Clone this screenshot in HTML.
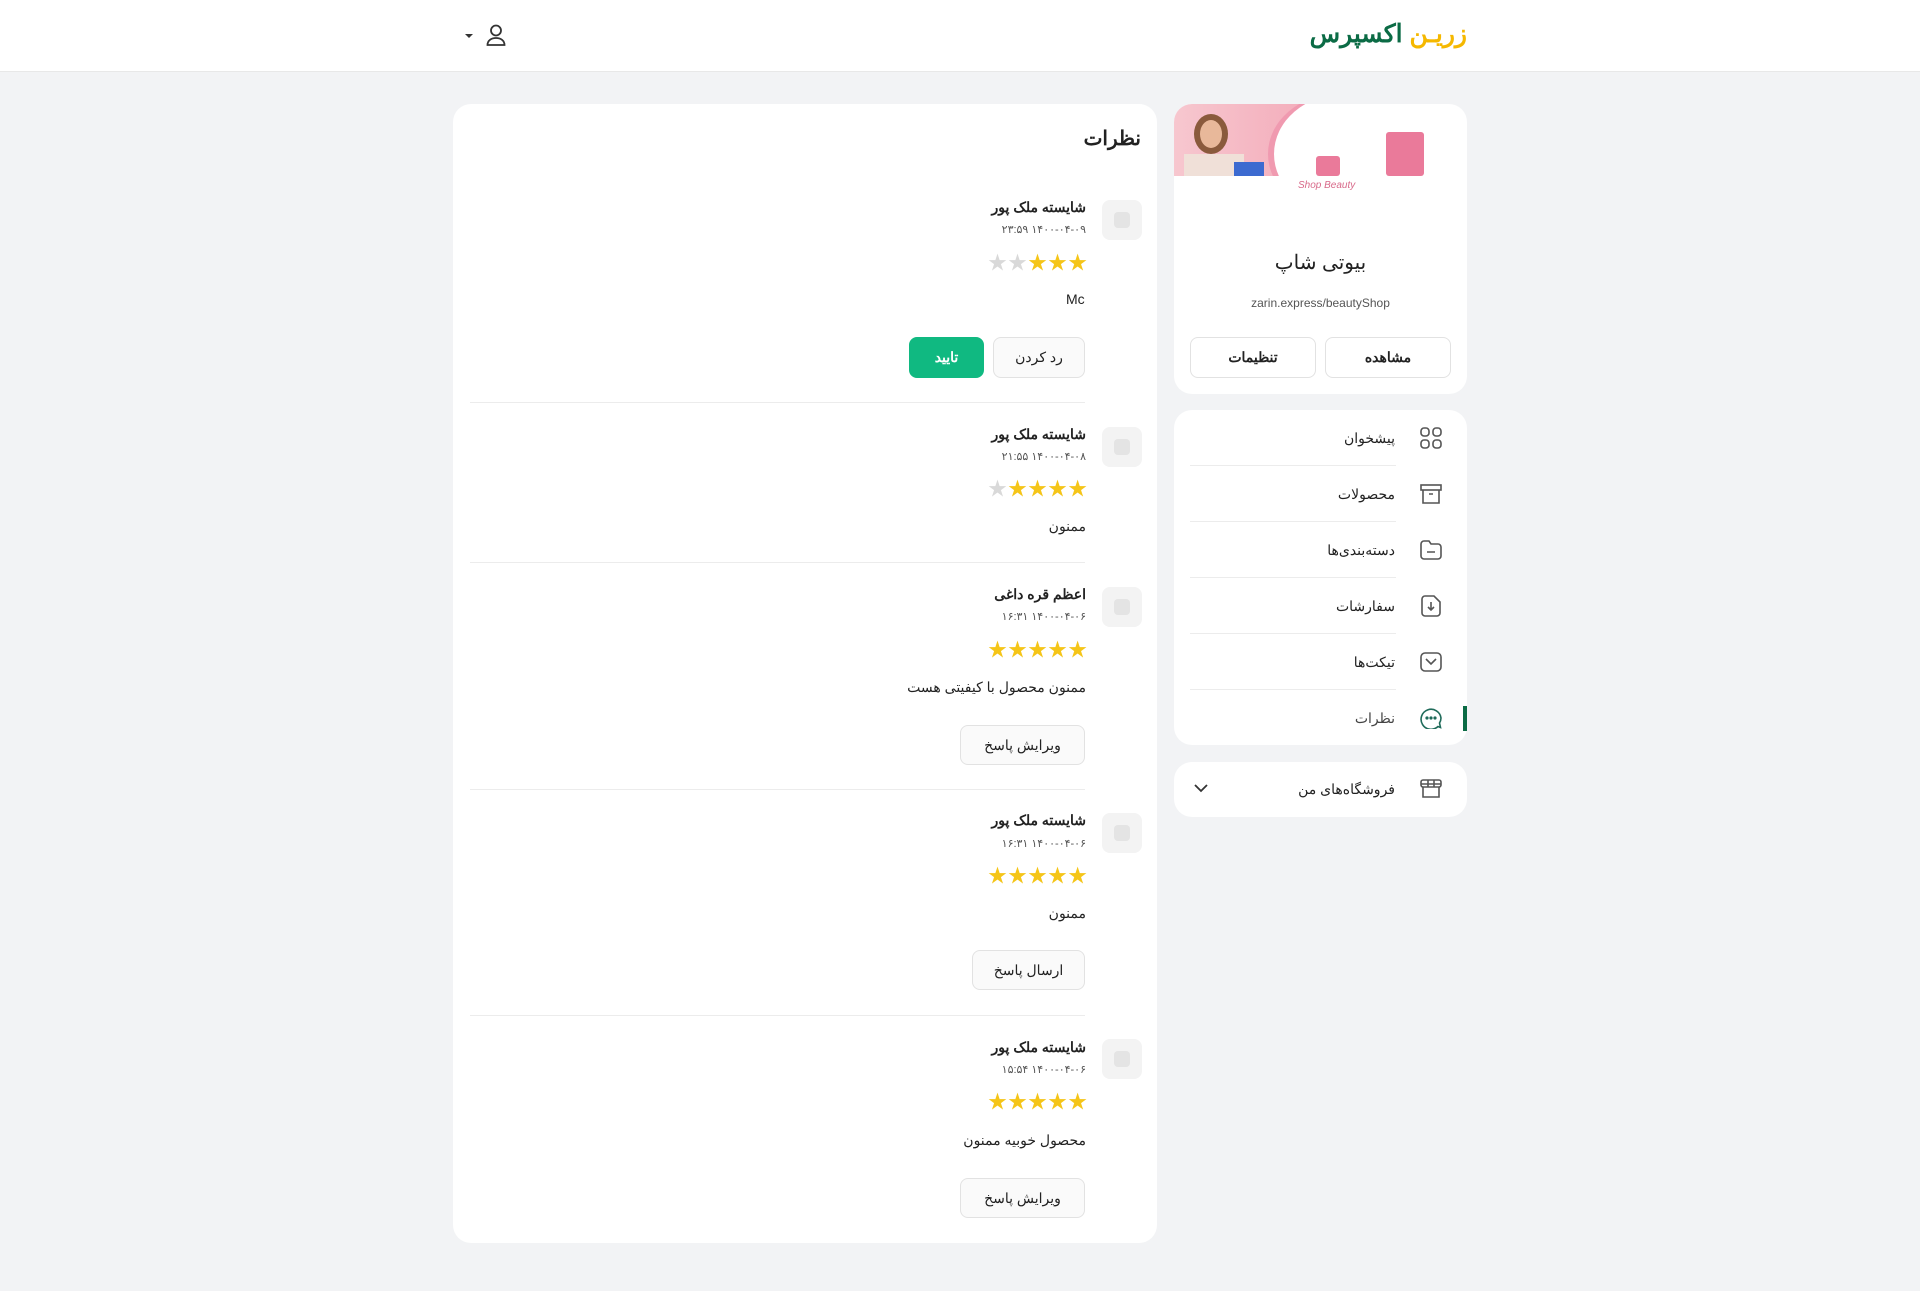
<!DOCTYPE html>
<html><head><meta charset="utf-8"><style>
*{box-sizing:border-box;margin:0;padding:0}
body{width:1920px;height:1291px;background:#f2f3f5;font-family:"Liberation Sans","Noto Sans CJK SC",sans-serif;color:#222;position:relative;overflow:hidden}
.a{position:absolute}
.r{position:absolute;direction:rtl;white-space:nowrap}
.card{position:absolute;background:#fff;border-radius:18px}
.btn{position:absolute;border:1px solid #e2e2e2;border-radius:8px;background:#fafafa;display:flex;align-items:center;justify-content:center;font-size:14px;direction:rtl}
.sep{position:absolute;height:1px;background:#ececec}
.av{position:absolute;width:40px;height:40px;border-radius:8px;background:#f3f3f3}
.av::after{content:"";position:absolute;left:12px;top:12px;width:16px;height:16px;border-radius:4px;background:#e4e4e4}
.name{font-size:14px;font-weight:bold}
.date{position:absolute;font-size:11px;color:#555;direction:ltr;white-space:nowrap;unicode-bidi:plaintext}
.txt{font-size:14px}
.stars{position:absolute;display:flex;gap:1px;font-size:19px;line-height:20px}
.y{color:#f5c518}.g{color:#d9d9d9}
.mi{position:absolute;font-size:14px;direction:rtl}
</style></head><body>
<div class="a" style="left:0;top:0;width:1920px;height:72px;background:#fff;border-bottom:1px solid #e8e8e8"></div>
<div class="r" style="right:453px;top:14px;font-size:25px;font-weight:bold;line-height:40px"><span style="color:#f5b800">زریـن</span> <span style="color:#0b6b45">اکسپرس</span></div>
<svg class="a" style="left:486px;top:24px" width="20" height="22" viewBox="0 0 20 22" fill="none" stroke="#333" stroke-width="1.8"><circle cx="10" cy="6.5" r="5"/><path d="M1.5 21c0-4.5 3.8-7 8.5-7s8.5 2.5 8.5 7z"/></svg>
<div class="a" style="left:465px;top:34px;width:0;height:0;border-left:4px solid transparent;border-right:4px solid transparent;border-top:4px solid #333"></div>

<!-- profile card -->
<div class="card" style="left:1174px;top:104px;width:293px;height:290px;overflow:hidden">
 <div class="a" style="left:0;top:0;width:293px;height:72px;overflow:hidden">
  <div class="a" style="left:0;top:0;width:155px;height:72px;background:linear-gradient(90deg,#f7c7cf,#f3a9b8)"></div>
  <div class="a" style="left:20px;top:10px;width:34px;height:40px;border-radius:50%;background:#8a5a3c"></div>
  <div class="a" style="left:26px;top:16px;width:22px;height:28px;border-radius:50%;background:#e8b89a"></div>
  <div class="a" style="left:10px;top:50px;width:60px;height:22px;background:#f0e0d8"></div>
  <div class="a" style="left:60px;top:58px;width:30px;height:14px;background:#3c6ad0"></div>
  <div class="a" style="left:100px;top:-10px;width:140px;height:120px;border-radius:50%;background:#fff;box-shadow:-6px 0 0 #f09ab0"></div>
  <div class="a" style="left:142px;top:52px;width:24px;height:20px;background:#ea7a9a;border-radius:3px"></div>
  <div class="a" style="left:212px;top:28px;width:38px;height:44px;background:#ea7a9a;border-radius:3px"></div>
 </div>
 <div class="a" style="left:124px;top:76px;font-size:10px;color:#d86a8a;font-style:italic">Shop Beauty</div>
 <div class="r" style="right:0;left:0;top:146px;text-align:center;font-size:20px;direction:rtl">بیوتی شاپ</div>
 <div class="a" style="left:0;right:0;top:192px;text-align:center;font-size:12px;color:#555">zarin.express/beautyShop</div>
</div>
<div class="btn" style="left:1325px;top:337px;width:126px;height:41px;background:#fff;font-weight:bold">مشاهده</div>
<div class="btn" style="left:1190px;top:337px;width:126px;height:41px;background:#fff;font-weight:bold">تنظیمات</div>

<!-- menu card -->
<div class="card" style="left:1174px;top:410px;width:293px;height:335px"></div>
<div class="sep" style="left:1190px;top:465px;width:206px"></div>
<div class="sep" style="left:1190px;top:521px;width:206px"></div>
<div class="sep" style="left:1190px;top:577px;width:206px"></div>
<div class="sep" style="left:1190px;top:633px;width:206px"></div>
<div class="sep" style="left:1190px;top:689px;width:206px"></div>
<div class="mi" style="right:525px;top:430px">پیشخوان</div>
<div class="mi" style="right:525px;top:486px">محصولات</div>
<div class="mi" style="right:525px;top:542px">دسته‌بندی‌ها</div>
<div class="mi" style="right:525px;top:598px">سفارشات</div>
<div class="mi" style="right:525px;top:654px">تیکت‌ها</div>
<div class="mi" style="right:525px;top:710px;color:#444">نظرات</div>
<svg class="a" style="left:1420px;top:427px" width="22" height="22" viewBox="0 0 22 22" fill="none" stroke="#555" stroke-width="1.6"><rect x="1" y="1" width="8" height="8" rx="3"/><rect x="13" y="1" width="8" height="8" rx="3"/><rect x="1" y="13" width="8" height="8" rx="3"/><rect x="13" y="13" width="8" height="8" rx="3"/></svg>
<svg class="a" style="left:1420px;top:483px" width="22" height="22" viewBox="0 0 22 22" fill="none" stroke="#555" stroke-width="1.6"><rect x="1" y="2" width="20" height="5"/><path d="M3 7v13h16V7M9 11h4"/></svg>
<svg class="a" style="left:1420px;top:539px" width="22" height="22" viewBox="0 0 22 22" fill="none" stroke="#555" stroke-width="1.6"><path d="M1 5a3 3 0 0 1 3-3h5l2 3h7a3 3 0 0 1 3 3v9a3 3 0 0 1-3 3H4a3 3 0 0 1-3-3zM7 13h8"/></svg>
<svg class="a" style="left:1421px;top:595px" width="20" height="22" viewBox="0 0 20 22" fill="none" stroke="#555" stroke-width="1.6"><path d="M4 1h9l6 6v11a3 3 0 0 1-3 3H4a3 3 0 0 1-3-3V4a3 3 0 0 1 3-3zM10 7v8M7 12l3 3 3-3"/></svg>
<svg class="a" style="left:1420px;top:651px" width="22" height="22" viewBox="0 0 22 22" fill="none" stroke="#555" stroke-width="1.6"><rect x="1" y="2" width="20" height="18" rx="4"/><path d="M6 8l5 5 5-5"/></svg>
<svg class="a" style="left:1420px;top:707px" width="22" height="22" viewBox="0 0 22 22" fill="none" stroke="#1f6b5a" stroke-width="1.6"><path d="M20.5 20.5l-2.5-1A10 10 0 1 1 21 11a10 10 0 0 1-1.5 5z"/><circle cx="7" cy="11" r=".8" fill="#1f6b5a"/><circle cx="11" cy="11" r=".8" fill="#1f6b5a"/><circle cx="15" cy="11" r=".8" fill="#1f6b5a"/></svg>
<div class="a" style="left:1463px;top:706px;width:4px;height:25px;background:#0b6b45"></div>

<div class="card" style="left:1174px;top:762px;width:293px;height:55px"></div>
<div class="mi" style="right:525px;top:781px">فروشگاه‌های من</div>
<svg class="a" style="left:1420px;top:779px" width="22" height="20" viewBox="0 0 22 20" fill="none" stroke="#555" stroke-width="1.6"><rect x="1" y="1" width="20" height="7" rx="2"/><path d="M3 8v10h16V8M1 5h20M8 1v7M14 1v7"/></svg>
<svg class="a" style="left:1194px;top:783px" width="14" height="10" viewBox="0 0 14 10" fill="none" stroke="#333" stroke-width="1.8"><path d="M1 2l6 6 6-6"/></svg>

<!-- main card -->
<div class="card" style="left:453px;top:104px;width:704px;height:1139px"></div>
<div class="r" style="right:779px;top:126px;font-size:20px;font-weight:bold">نظرات</div>

<!-- review 1 -->
<div class="av" style="left:1102px;top:200px"></div>
<div class="r name" style="right:834px;top:199px">شایسته ملک پور</div>
<div class="date" style="right:834px;top:223px">۲۳:۵۹ ۱۴۰۰-۰۴-۰۹</div>
<div class="stars" style="left:988px;top:254px"><span class="g">★</span><span class="g">★</span><span class="y">★</span><span class="y">★</span><span class="y">★</span></div>
<div class="a txt" style="left:1066px;top:291px">Mc</div>
<div class="btn" style="left:993px;top:337px;width:92px;height:41px">رد کردن</div>
<div class="btn" style="left:909px;top:337px;width:75px;height:41px;background:#10b981;border-color:#10b981;color:#fff;font-weight:bold">تایید</div>
<div class="sep" style="left:470px;top:402px;width:615px"></div>

<!-- review 2 -->
<div class="av" style="left:1102px;top:427px"></div>
<div class="r name" style="right:834px;top:426px">شایسته ملک پور</div>
<div class="date" style="right:834px;top:450px">۲۱:۵۵ ۱۴۰۰-۰۴-۰۸</div>
<div class="stars" style="left:988px;top:480px"><span class="g">★</span><span class="y">★</span><span class="y">★</span><span class="y">★</span><span class="y">★</span></div>
<div class="r txt" style="right:834px;top:518px">ممنون</div>
<div class="sep" style="left:470px;top:562px;width:615px"></div>

<!-- review 3 -->
<div class="av" style="left:1102px;top:587px"></div>
<div class="r name" style="right:834px;top:586px">اعظم قره داغی</div>
<div class="date" style="right:834px;top:610px">۱۶:۳۱ ۱۴۰۰-۰۴-۰۶</div>
<div class="stars" style="left:988px;top:641px"><span class="y">★</span><span class="y">★</span><span class="y">★</span><span class="y">★</span><span class="y">★</span></div>
<div class="r txt" style="right:834px;top:679px">ممنون محصول با کیفیتی هست</div>
<div class="btn" style="left:960px;top:725px;width:125px;height:40px">ویرایش پاسخ</div>
<div class="sep" style="left:470px;top:789px;width:615px"></div>

<!-- review 4 -->
<div class="av" style="left:1102px;top:813px"></div>
<div class="r name" style="right:834px;top:812px">شایسته ملک پور</div>
<div class="date" style="right:834px;top:837px">۱۶:۳۱ ۱۴۰۰-۰۴-۰۶</div>
<div class="stars" style="left:988px;top:867px"><span class="y">★</span><span class="y">★</span><span class="y">★</span><span class="y">★</span><span class="y">★</span></div>
<div class="r txt" style="right:834px;top:905px">ممنون</div>
<div class="btn" style="left:972px;top:950px;width:113px;height:40px">ارسال پاسخ</div>
<div class="sep" style="left:470px;top:1015px;width:615px"></div>

<!-- review 5 -->
<div class="av" style="left:1102px;top:1039px"></div>
<div class="r name" style="right:834px;top:1039px">شایسته ملک پور</div>
<div class="date" style="right:834px;top:1063px">۱۵:۵۴ ۱۴۰۰-۰۴-۰۶</div>
<div class="stars" style="left:988px;top:1093px"><span class="y">★</span><span class="y">★</span><span class="y">★</span><span class="y">★</span><span class="y">★</span></div>
<div class="r txt" style="right:834px;top:1132px">محصول خوبیه ممنون</div>
<div class="btn" style="left:960px;top:1178px;width:125px;height:40px">ویرایش پاسخ</div>
</body></html>
